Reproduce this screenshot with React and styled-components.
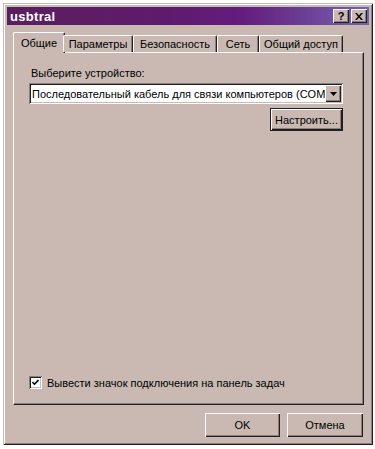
import React from 'react'
import styled, { createGlobalStyle } from 'styled-components'

const face = '#c9b9b2'
const shadow = '#8c7f79'
const dark = '#202020'

const GlobalStyle = createGlobalStyle`
  html, body {
    margin: 0;
    padding: 0;
    background: #fff;
  }
  body {
    font-family: "Liberation Sans", Arial, sans-serif;
    font-size: 11px;
    color: #000;
  }
`

const Page = styled.div`
  width: 375px;
  height: 449px;
  padding: 3px 0 0 3px;
  box-sizing: border-box;
`

const Window = styled.div`
  width: 370px;
  height: 442px;
  box-sizing: border-box;
  background: ${face};
  padding: 4px;
  display: flex;
  flex-direction: column;
  box-shadow:
    inset 1px 1px 0 ${face},
    inset -1px -1px 0 ${dark},
    inset 2px 2px 0 #fff,
    inset -2px -2px 0 ${shadow};
`

const TitleBar = styled.div`
  height: 18px;
  display: flex;
  align-items: center;
  justify-content: space-between;
  padding: 0 2px 0 3px;
  background: linear-gradient(to right, #5a1f5d 0%, #5e1b6e 45%, #641c7e 65%, #7463b0 100%);
`

const Title = styled.span`
  color: #fff;
  font-weight: bold;
  font-size: 13px;
  letter-spacing: 0.3px;
`

const TitleButtons = styled.div`
  display: flex;
  gap: 2px;
`

const TitleButton = styled.div`
  width: 16px;
  height: 14px;
  box-sizing: border-box;
  background: ${face};
  display: flex;
  align-items: center;
  justify-content: center;
  font-weight: bold;
  font-size: 11px;
  line-height: 1;
  box-shadow:
    inset 1px 1px 0 #fff,
    inset -1px -1px 0 ${dark},
    inset -2px -2px 0 ${shadow};
`

const Body = styled.div`
  flex: 1;
  display: flex;
  flex-direction: column;
  padding: 7px 0 0 6px;
`

const TabRow = styled.div`
  display: flex;
  align-items: flex-end;
  height: 20px;
  padding-left: 2px;
  position: relative;
  z-index: 1;
`

const Tab = styled.div`
  width: ${p => p.$w}px;
  height: ${p => (p.$active ? 21 : 17)}px;
  margin: 0 ${p => (p.$active ? '-2px' : '0')};
  margin-bottom: ${p => (p.$active ? '-1px' : '0')};
  box-sizing: border-box;
  background: ${face};
  display: flex;
  align-items: flex-start;
  justify-content: center;
  padding-top: ${p => (p.$active ? 4 : 2)}px;
  border-radius: 2px 2px 0 0;
  border-top: 1px solid #fff;
  border-left: 1px solid #fff;
  border-right: 1px solid ${dark};
  box-shadow: inset -1px 0 0 ${shadow};
  white-space: nowrap;
`

const Panel = styled.div`
  width: 351px;
  height: 353px;
  box-sizing: border-box;
  display: flex;
  flex-direction: column;
  padding: 14px 20px 15px 15px;
  border-top: 1px solid #fff;
  border-left: 1px solid #fff;
  border-right: 1px solid ${dark};
  border-bottom: 1px solid ${dark};
  box-shadow: inset -1px -1px 0 ${shadow};
`

const Label = styled.div`
  line-height: 13px;
  margin-bottom: 3px;
  padding-left: 2px;
`

const Combo = styled.div`
  height: 21px;
  box-sizing: border-box;
  background: #fff;
  display: flex;
  align-items: center;
  padding: 2px;
  box-shadow:
    inset 1px 1px 0 ${shadow},
    inset -1px -1px 0 #fff,
    inset 2px 2px 0 ${dark},
    inset -2px -2px 0 ${face};
`

const ComboText = styled.div`
  flex: 1;
  overflow: hidden;
  white-space: nowrap;
  padding-left: 1px;
  font-size: 11px;
`

const ComboArrow = styled.div`
  width: 16px;
  height: 17px;
  box-sizing: border-box;
  background: ${face};
  display: flex;
  align-items: center;
  justify-content: center;
  box-shadow:
    inset 1px 1px 0 #fff,
    inset -1px -1px 0 ${dark},
    inset -2px -2px 0 ${shadow};
`

const ButtonRow = styled.div`
  display: flex;
  justify-content: flex-end;
  gap: ${p => p.$gap || 0}px;
  margin-top: ${p => p.$top || 0}px;
  padding-right: ${p => p.$right || 0}px;
`

const Button = styled.div`
  width: ${p => p.$w}px;
  height: ${p => p.$h}px;
  box-sizing: border-box;
  background: ${face};
  display: flex;
  align-items: center;
  justify-content: center;
  box-shadow: ${p =>
    p.$default
      ? `inset 0 0 0 1px ${dark}, inset 2px 2px 0 #fff, inset -2px -2px 0 ${dark}, inset -3px -3px 0 ${shadow}`
      : `inset 1px 1px 0 #fff, inset -1px -1px 0 ${dark}, inset -2px -2px 0 ${shadow}`};
`

const CheckRow = styled.label`
  margin-top: auto;
  display: flex;
  align-items: center;
  gap: 5px;
`

const CheckBox = styled.div`
  width: 13px;
  height: 13px;
  box-sizing: border-box;
  background: #fff;
  display: flex;
  align-items: center;
  justify-content: center;
  box-shadow:
    inset 1px 1px 0 ${shadow},
    inset -1px -1px 0 #fff,
    inset 2px 2px 0 ${dark},
    inset -2px -2px 0 ${face};
`

const tabs = [
  { name: 'Общие', w: 52 },
  { name: 'Параметры', w: 70 },
  { name: 'Безопасность', w: 84 },
  { name: 'Сеть', w: 42 },
  { name: 'Общий доступ', w: 84 },
]

export default function App() {
  return (
    <Page>
      <GlobalStyle />
      <Window>
        <TitleBar>
          <Title>usbtral</Title>
          <TitleButtons>
            <TitleButton>?</TitleButton>
            <TitleButton>
              <svg width="8" height="7" viewBox="0 0 8 7">
                <path d="M0 0h2l2 2.5L6 0h2L5 3.5 8 7H6L4 4.5 2 7H0l3-3.5z" fill="#000" />
              </svg>
            </TitleButton>
          </TitleButtons>
        </TitleBar>
        <Body>
          <TabRow>
            {tabs.map((t, i) => (
              <Tab key={t.name} $w={t.w} $active={i === 0}>{t.name}</Tab>
            ))}
          </TabRow>
          <Panel>
            <Label>Выберите устройство:</Label>
            <Combo>
              <ComboText>Последовательный кабель для связи компьютеров (COM3)</ComboText>
              <ComboArrow>
                <svg width="7" height="4" viewBox="0 0 7 4">
                  <path d="M0 0h7L3.5 4z" fill="#000" />
                </svg>
              </ComboArrow>
            </Combo>
            <ButtonRow $top={4}>
              <Button $w={73} $h={23} $default>Настроить...</Button>
            </ButtonRow>
            <CheckRow>
              <CheckBox>
                <svg width="7" height="7" viewBox="0 0 7 7">
                  <path d="M0.5 3 L2.5 5.2 L6.5 1" stroke="#000" strokeWidth="1.6" fill="none" />
                </svg>
              </CheckBox>
              Вывести значок подключения на панель задач
            </CheckRow>
          </Panel>
          <ButtonRow $top={8} $gap={7} $right={6}>
            <Button $w={75} $h={24}>OK</Button>
            <Button $w={76} $h={24}>Отмена</Button>
          </ButtonRow>
        </Body>
      </Window>
    </Page>
  )
}
